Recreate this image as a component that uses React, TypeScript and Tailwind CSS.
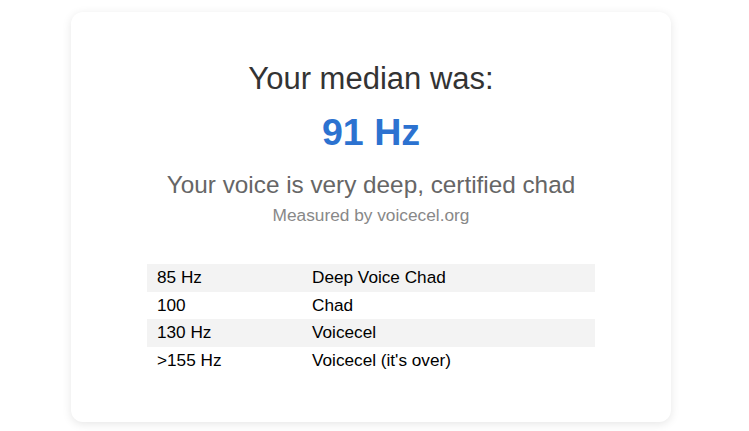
export default function App() {
  const rows = [
    ["85 Hz", "Deep Voice Chad"],
    ["100", "Chad"],
    ["130 Hz", "Voicecel"],
    [">155 Hz", "Voicecel (it's over)"],
  ];
  return (
    <div className="min-h-[431px] w-[749px] bg-white" style={{ fontFamily: '"Liberation Sans", Arial, sans-serif' }}>
      <div className="pt-[12px] pl-[71px]">
        <div className="w-[600px] h-[410px] rounded-[12px] bg-white shadow-[0_2px_10px_rgba(0,0,0,0.1)] px-[20px] pt-[49px] flex flex-col items-center text-center">
          <div className="text-[31px] leading-[35.2px] text-[#333]">Your median was:</div>
          <div className="mt-[15px] text-[37.6px] leading-[43px] font-bold text-[#2c72d0]">91 Hz</div>
          <div className="mt-[16.5px] text-[24.3px] leading-[27.3px] text-[#666]">Your voice is very deep, certified chad</div>
          <div className="mt-[8px] text-[17.3px] leading-[19.5px] text-[#888]">Measured by voicecel.org</div>
          <div className="mt-[38.7px] w-[448px] text-left text-[17.2px] leading-[19.5px] text-black">
            {rows.map((r, i) => (
              <div key={i} className={`grid grid-cols-[155px_1fr] ${i % 2 === 0 ? "bg-[#f3f3f3]" : "bg-white"}`}>
                <div className="py-[4px] px-[10px]">{r[0]}</div>
                <div className="py-[4px] px-[10px]">{r[1]}</div>
              </div>
            ))}
          </div>
        </div>
      </div>
    </div>
  );
}
